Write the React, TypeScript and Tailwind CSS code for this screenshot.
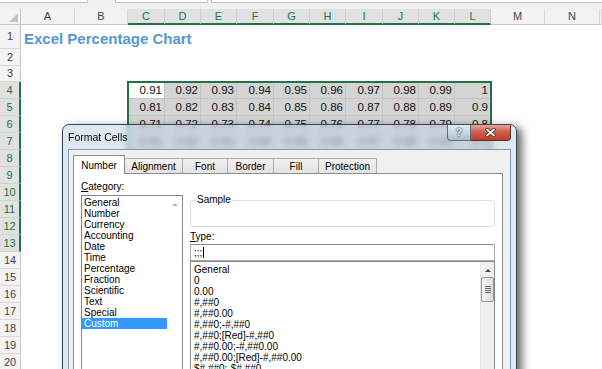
import React from 'react';

const COLS = ['A', 'B', 'C', 'D', 'E', 'F', 'G', 'H', 'I', 'J', 'K', 'L', 'M', 'N', ''];
const SEL = ['C', 'D', 'E', 'F', 'G', 'H', 'I', 'J', 'K', 'L'];

function val(r: number, j: number) {
  const v = (100 - (r - 4) * 10 - 9 + j) / 100;
  return String(Number(v.toFixed(2)));
}

const CATEGORIES = ['General', 'Number', 'Currency', 'Accounting', 'Date', 'Time', 'Percentage', 'Fraction', 'Scientific', 'Text', 'Special', 'Custom'];
const TYPES = [
  'General',
  '0',
  '0.00',
  '#,##0',
  '#,##0.00',
  '#,##0;-#,##0',
  '#,##0;[Red]-#,##0',
  '#,##0.00;-#,##0.00',
  '#,##0.00;[Red]-#,##0.00',
  '$#,##0;-$#,##0',
  '$#,##0;[Red]-$#,##0',
];

function Sheet() {
  const rows = Array.from({ length: 20 }, (_, i) => i + 1);
  return (
    <div className="relative grid grid-cols-[21px_54px_53px_37px_36px_36px_37px_36px_36px_37px_36px_36px_36px_54px_55px_1fr] grid-rows-[16px_24px_17px_16px_repeat(17,17px)] text-[11px] font-['Liberation_Sans',sans-serif]">
      {/* corner */}
      <div className="relative bg-[#f3f3f3] border-r border-b border-[#c6c6c6]">
        <div className="absolute right-[2px] bottom-[2px] w-0 h-0 border-l-[9px] border-l-transparent border-b-[9px] border-b-[#c4c4c4]" />
      </div>
      {COLS.map((c, i) => {
        const s = SEL.includes(c);
        return (
          <div
            key={'h' + i}
            className={
              s
                ? 'flex items-center justify-center bg-[#e1e1e1] text-[#217346] border-r border-r-[#d0d0d0] border-b-2 border-b-[#217346]'
                : 'flex items-center justify-center bg-[#f3f3f3] text-[#444] border-r border-r-[#d8d8d8] border-b border-b-[#c6c6c6]'
            }
          >
            {c}
          </div>
        );
      })}
      {rows.map((r) => {
        const rs = r >= 4 && r <= 13;
        return (
          <React.Fragment key={'r' + r}>
            <div
              className={
                rs
                  ? 'flex items-center justify-center bg-[#e1e1e1] text-[#217346] border-b border-b-[#d0d0d0] border-r-2 border-r-[#217346]'
                  : 'flex items-center justify-center bg-[#f3f3f3] text-[#444] border-b border-b-[#d8d8d8] border-r border-r-[#c6c6c6]'
              }
            >
              {r}
            </div>
            {COLS.map((c, i) => {
              const inRange = rs && SEL.includes(c);
              if (r === 1 && i === 0) {
                return (
                  <div key={c + r} className="relative z-10 flex items-end pl-[3px] pb-[2px] whitespace-nowrap">
                    <span className="text-[15px] leading-[17px] font-bold text-[#5596d8]">Excel Percentage Chart</span>
                  </div>
                );
              }
              if (!inRange) return <div key={c + r + i} />;
              const j = SEL.indexOf(c);
              const active = r === 4 && c === 'C';
              return (
                <div
                  key={c + r}
                  className={
                    active
                      ? 'flex items-end justify-end pr-[2px] pb-[1px] leading-[14px] text-[11.5px] bg-white text-[#111] border-r border-b border-[#c4c4c4]'
                      : 'flex items-end justify-end pr-[2px] pb-[1px] leading-[14px] text-[11.5px] bg-[#d4d4d4] text-[#111] border-r border-b border-[#c4c4c4]'
                  }
                >
                  {val(r, j)}
                </div>
              );
            })}
          </React.Fragment>
        );
      })}
      {/* selection border */}
      <div className="absolute -top-px -left-px -right-px -bottom-px col-start-4 col-end-14 row-start-5 row-end-15 border-2 border-[#217346] pointer-events-none" />
    </div>
  );
}

function Tab({ label, active, w }: { label: string; active?: boolean; w: string }) {
  return (
    <div
      className={
        active
          ? `relative z-10 ${w} h-[19px] -mb-px flex items-center justify-center border border-b-0 border-[#898c95] bg-white`
          : `${w} h-[15px] -ml-px flex items-center justify-center border border-b-0 border-[#acacac] bg-linear-to-b from-[#f2f2f2] to-[#e3e3e3]`
      }
    >
      {label}
    </div>
  );
}

function Dialog() {
  return (
    <div className="absolute left-[62px] top-[124px] w-[455px] h-[275px] rounded-t-[7px] border border-[#3c4652] bg-[#c3d6ea]/55 backdrop-blur-[3px] shadow-[5px_3px_9px_rgba(0,0,0,0.6)] px-[5px] flex flex-col font-['Liberation_Sans',sans-serif] text-[10px] text-black">
      {/* title bar */}
      <div className="flex h-[24px] shrink-0">
        <div className="pt-[6px] text-[10.5px] leading-[13px]">Format Cells</div>
        <div className="ml-auto flex h-[16px]">
          <div className="w-[24px] h-[16px] flex items-center justify-center rounded-bl-[4px] border border-t-0 border-[#5e6b78] bg-linear-to-b from-[#e4ecf4] to-[#aebfd0] text-white font-bold text-[11px] [text-shadow:0_0_2px_#222,0_0_1px_#222]">
            ?
          </div>
          <div className="w-[40px] h-[16px] flex items-center justify-center rounded-br-[4px] border border-t-0 border-l-0 border-[#5b2f28] bg-linear-to-b from-[#e6a395] via-[#cf5a48] to-[#c23b2a]">
            <svg width="11" height="9" viewBox="0 0 11 9">
              <path d="M2 1.5 L9 7.5 M9 1.5 L2 7.5" stroke="#4a1f18" strokeWidth="3.4" strokeLinecap="round" />
              <path d="M2 1.5 L9 7.5 M9 1.5 L2 7.5" stroke="#ffffff" strokeWidth="1.8" strokeLinecap="round" />
            </svg>
          </div>
        </div>
      </div>
      {/* content */}
      <div className="flex-1 flex flex-col bg-[#f0f0f0] border border-[#8597ad] pt-[5px]">
        <div className="flex items-end pl-[4px] h-[18px] shrink-0">
          <Tab label="Number" active w="w-[52px]" />
          <Tab label="Alignment" w="w-[59px]" />
          <Tab label="Font" w="w-[46px]" />
          <Tab label="Border" w="w-[47px]" />
          <Tab label="Fill" w="w-[46px]" />
          <Tab label="Protection" w="w-[59px]" />
        </div>
        <div className="ml-[4px] w-[430px] flex-1 flex gap-[7px] bg-white border border-[#898c95] px-[7px] pt-[7px]">
          {/* left column */}
          <div className="w-[102px] flex flex-col">
            <div className="leading-[12px]">
              <span className="underline">C</span>ategory:
            </div>
            <div className="mt-[2px] flex-1 flex border border-[#828790] bg-white">
              <div className="w-[85px] pt-[1px] flex flex-col">
                {CATEGORIES.map((c) => (
                  <div
                    key={c}
                    className={
                      c === 'Custom'
                        ? 'h-[11px] leading-[11px] pl-[2px] bg-[#3399ff] text-white'
                        : 'h-[11px] leading-[11px] pl-[2px]'
                    }
                  >
                    {c}
                  </div>
                ))}
              </div>
              <div className="w-[15px] flex justify-center pt-[7px]">
                <div className="w-0 h-0 border-l-[3px] border-l-transparent border-r-[3px] border-r-transparent border-b-[3px] border-b-[#b8b8b8]" />
              </div>
            </div>
          </div>
          {/* right column */}
          <div className="w-[307px] mt-[13px] flex flex-col">
            <fieldset className="h-[33px] border border-[#d5dfe5] rounded-[3px] px-[5px]">
              <legend className="px-[1px] leading-[12px]">Sample</legend>
            </fieldset>
            <div className="mt-[4px] leading-[12px]">
              <span className="underline">T</span>ype:
            </div>
            <div className="mt-[1px] h-[17px] flex items-center pl-[3px] bg-white border border-[#abadb3] border-t-[#8e8f8f]">
              <span className="leading-[12px]">;;;</span>
              <span className="ml-[1px] w-px h-[11px] bg-black" />
            </div>
            <div className="flex-1 flex border border-[#828790] bg-white">
              <div className="flex-1 pt-[2px] pl-[3px] flex flex-col">
                {TYPES.map((t) => (
                  <div key={t} className="h-[11px] leading-[11px] whitespace-nowrap">
                    {t}
                  </div>
                ))}
              </div>
              <div className="w-[14px] flex flex-col items-center bg-[#f0f0f0] border-l border-[#e6e6e6]">
                <div className="mt-[7px] w-0 h-0 border-l-[3px] border-l-transparent border-r-[3px] border-r-transparent border-b-[3px] border-b-[#404040]" />
                <div className="mt-[5px] w-[13px] h-[25px] rounded-[2px] border border-[#979797] bg-linear-to-r from-[#f6f6f6] to-[#dcdcdc] flex flex-col items-center justify-center gap-[1px]">
                  <div className="w-[6px] h-px bg-[#6b6b6b]" />
                  <div className="w-[6px] h-px bg-[#6b6b6b]" />
                  <div className="w-[6px] h-px bg-[#6b6b6b]" />
                  <div className="w-[6px] h-px bg-[#6b6b6b]" />
                </div>
              </div>
            </div>
          </div>
        </div>
      </div>
    </div>
  );
}

export default function App() {
  return (
    <div className="relative w-[602px] h-[369px] overflow-hidden bg-white">
      <div className="h-[9px] bg-[#f0f0f0] flex items-start">
        <div className="h-[3px] w-[88px] bg-white border-b border-r border-[#c6c6c6]" />
        <div className="h-[3px] w-[27px]" />
        <div className="h-[3px] w-[93px] bg-white border-b border-x border-[#c6c6c6]" />
        <div className="h-[3px] w-[3px]" />
        <div className="h-[3px] flex-1 bg-white border-b border-l border-[#c6c6c6]" />
      </div>
      <Sheet />
      <Dialog />
    </div>
  );
}
